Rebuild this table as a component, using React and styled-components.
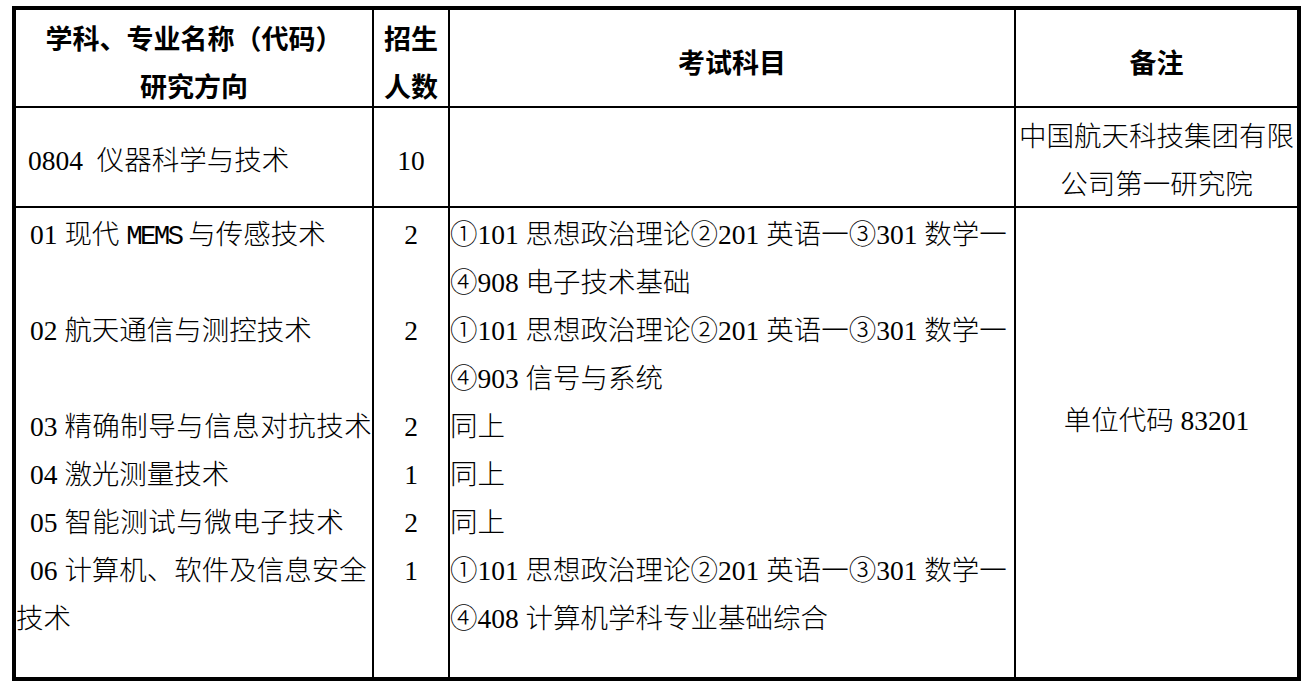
import React from "react";
import styled, { createGlobalStyle } from "styled-components";

const GlobalStyle = createGlobalStyle`
  html, body {
    margin: 0;
    padding: 0;
    background: #fff;
  }
  body {
    font-family: "Liberation Serif", "Noto Sans CJK SC", serif;
    color: #000;
  }
`;

const Page = styled.div`
  padding: 6px 0 0 12px;
`;

const Table = styled.table`
  width: 1289px;
  box-sizing: border-box;
  table-layout: fixed;
  border-collapse: separate;
  border-spacing: 0;
  border: 4px solid #000;
`;

const HeadCell = styled.th`
  width: ${(p) => p.$w}px;
  height: 97px;
  box-sizing: border-box;
  padding: 0;
  border-right: ${(p) => (p.$last ? "none" : "2px solid #000")};
  border-bottom: 2px solid #000;
  font-family: "Noto Sans CJK SC", sans-serif;
  font-weight: 700;
  font-size: 27px;
  line-height: 48px;
  text-align: center;
  vertical-align: middle;
`;

const Cell = styled.td`
  box-sizing: border-box;
  height: ${(p) => (p.$h ? `${p.$h}px` : "auto")};
  padding: ${(p) => p.$pt || 0}px 0 ${(p) => p.$pb || 0}px 0;
  border-right: ${(p) => (p.$last ? "none" : "2px solid #000")};
  border-bottom: ${(p) => (p.$bottom ? "2px solid #000" : "none")};
  font-size: 27.5px;
  font-weight: 300;
  line-height: 48px;
  text-align: ${(p) => p.$align || "left"};
  text-indent: ${(p) => p.$indent || 0}px;
  vertical-align: ${(p) => p.$valign || "top"};
`;

// shifts the text box without changing the height it takes in the row
const CellText = styled.div`
  margin-top: ${(p) => p.$shift || 0}px;
  margin-bottom: ${(p) => -(p.$shift || 0)}px;
`;

const NameLine = styled.div`
  white-space: ${(p) => (p.$spread ? "nowrap" : "normal")};
`;

const ExamLine = styled.div`
  white-space: nowrap;
`;

const Title = styled.span`
  letter-spacing: ${(p) => (p.$spread ? "0.5px" : "0")};
`;

const Latin = styled.span`
  font-family: "Liberation Mono", monospace;
  font-weight: 400;
  letter-spacing: -2.75px;
`;

const basicExam = "①101 思想政治理论②201 英语一③301 数学一";

const directions = [
  {
    code: "01",
    title: (
      <>
        现代 <Latin>MEMS</Latin> 与传感技术
      </>
    ),
    count: 2,
    exam: [basicExam, "④908 电子技术基础"],
  },
  {
    code: "02",
    title: "航天通信与测控技术",
    count: 2,
    exam: [basicExam, "④903 信号与系统"],
  },
  { code: "03", title: "精确制导与信息对抗技术", spread: true, count: 2, exam: ["同上"] },
  { code: "04", title: "激光测量技术", count: 1, exam: ["同上"] },
  { code: "05", title: "智能测试与微电子技术", spread: true, count: 2, exam: ["同上"] },
  {
    code: "06",
    title: "计算机、软件及信息安全技术",
    count: 1,
    exam: [basicExam, "④408 计算机学科专业基础综合"],
  },
];

const App = () => {
  return (
    <Page>
      <GlobalStyle />
      <Table>
        <thead>
          <tr>
            <HeadCell $w={358}>
              <CellText $shift={4}>
                学科、专业名称（代码）
                <br />
                研究方向
              </CellText>
            </HeadCell>
            <HeadCell $w={76}>
              <CellText $shift={4}>招生人数</CellText>
            </HeadCell>
            <HeadCell $w={566}>
              <CellText $shift={4}>考试科目</CellText>
            </HeadCell>
            <HeadCell $w={281} $last>
              <CellText $shift={4}>备注</CellText>
            </HeadCell>
          </tr>
        </thead>
        <tbody>
          <tr>
            <Cell $h={100} $bottom $valign="middle" $indent={12}>
              <CellText $shift={4}>0804&nbsp;&nbsp;仪器科学与技术</CellText>
            </Cell>
            <Cell $h={100} $bottom $valign="middle" $align="center">
              <CellText $shift={4}>10</CellText>
            </Cell>
            <Cell $h={100} $bottom />
            <Cell $h={100} $bottom $last $valign="middle" $align="center">
              <CellText $shift={4}>中国航天科技集团有限公司第一研究院</CellText>
            </Cell>
          </tr>
          {directions.map((d, i) => {
            const first = i === 0;
            const last = i === directions.length - 1;
            const pt = first ? 3 : 0;
            const pb = last ? 34 : 0;
            return (
              <tr key={d.code}>
                <Cell $pt={pt} $pb={pb} $indent={14}>
                  <NameLine $spread={d.spread}>
                    {d.code} <Title $spread={d.spread}>{d.title}</Title>
                  </NameLine>
                </Cell>
                <Cell $pt={pt} $pb={pb} $align="center">
                  {d.count}
                </Cell>
                <Cell $pt={pt} $pb={pb}>
                  {d.exam.map((line, j) => (
                    <ExamLine key={j}>{line}</ExamLine>
                  ))}
                </Cell>
                {first && (
                  <Cell rowSpan={directions.length} $last $valign="middle" $align="center">
                    <CellText $shift={-22}>单位代码 83201</CellText>
                  </Cell>
                )}
              </tr>
            );
          })}
        </tbody>
      </Table>
    </Page>
  );
};

export default App;
